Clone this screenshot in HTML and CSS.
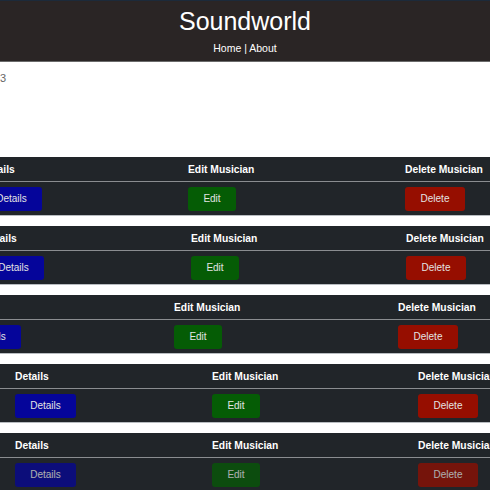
FILE: index.html
```html
<!DOCTYPE html>
<html lang="en">
<head>
<meta charset="utf-8">
<title>Soundworld</title>
<link rel="stylesheet" href="styles.css">
</head>
<body>
<header class="site-header">
  <h1 class="site-title">Soundworld</h1>
  <nav class="site-nav"><a href="#">Home</a> | <a href="#">About</a></nav>
</header>
<main class="content">
  <p class="count">3</p>
  <div class="list">
    <div class="table-wrap t1">
      <table class="musicians">
        <colgroup><col class="c1"><col class="c2"><col class="c3"></colgroup>
        <thead><tr><th>Details</th><th>Edit Musician</th><th>Delete Musician</th></tr></thead>
        <tbody><tr><td><button class="btn btn-details">Details</button></td><td><button class="btn btn-edit">Edit</button></td><td><button class="btn btn-delete">Delete</button></td></tr></tbody>
      </table>
    </div>
    <div class="table-wrap t2">
      <table class="musicians">
        <colgroup><col class="c1"><col class="c2"><col class="c3"></colgroup>
        <thead><tr><th>Details</th><th>Edit Musician</th><th>Delete Musician</th></tr></thead>
        <tbody><tr><td><button class="btn btn-details">Details</button></td><td><button class="btn btn-edit">Edit</button></td><td><button class="btn btn-delete">Delete</button></td></tr></tbody>
      </table>
    </div>
    <div class="table-wrap t3">
      <table class="musicians">
        <colgroup><col class="c1"><col class="c2"><col class="c3"></colgroup>
        <thead><tr><th>Details</th><th>Edit Musician</th><th>Delete Musician</th></tr></thead>
        <tbody><tr><td><button class="btn btn-details">Details</button></td><td><button class="btn btn-edit">Edit</button></td><td><button class="btn btn-delete">Delete</button></td></tr></tbody>
      </table>
    </div>
    <div class="table-wrap t4">
      <table class="musicians">
        <colgroup><col class="c1"><col class="c2"><col class="c3"></colgroup>
        <thead><tr><th>Details</th><th>Edit Musician</th><th>Delete Musician</th></tr></thead>
        <tbody><tr><td><button class="btn btn-details">Details</button></td><td><button class="btn btn-edit">Edit</button></td><td><button class="btn btn-delete">Delete</button></td></tr></tbody>
      </table>
    </div>
    <div class="table-wrap t4 faded">
      <table class="musicians">
        <colgroup><col class="c1"><col class="c2"><col class="c3"></colgroup>
        <thead><tr><th>Details</th><th>Edit Musician</th><th>Delete Musician</th></tr></thead>
        <tbody><tr><td><button class="btn btn-details">Details</button></td><td><button class="btn btn-edit">Edit</button></td><td><button class="btn btn-delete">Delete</button></td></tr></tbody>
      </table>
    </div>
  </div>
</main>
</body>
</html>
```

FILE: styles.css
```css
html, body {
  margin: 0;
  padding: 0;
  background: #ffffff;
  font-family: "Liberation Sans", Arial, sans-serif;
}

.site-header {
  background: #2a2525;
  border-top: 1px solid #1c2a3a;
  border-bottom: 1px solid #6a6a6a;
  height: 60px;
  box-sizing: content-box;
  text-align: center;
  color: #ffffff;
}

.site-title {
  margin: 0;
  padding-top: 6px;
  font-size: 25px;
  line-height: 29px;
  font-weight: normal;
}

.site-nav {
  margin-top: 6px;
  font-size: 10.5px;
  line-height: 12px;
  color: #ffffff;
}

.site-nav a {
  color: #ffffff;
  text-decoration: none;
}

.count {
  margin: 10px 0 72px 0;
  font-size: 11px;
  line-height: 13px;
  color: #666666;
}

.list {
  display: flex;
  flex-direction: column;
  gap: 10px;
}

.table-wrap {
  overflow: hidden;
  background: #212529;
  border-bottom: 1px solid #b8bcc0;
}

.musicians {
  border-collapse: collapse;
  table-layout: fixed;
  width: 640px;
  color: #ffffff;
}

.musicians th {
  height: 24px;
  padding: 0 8px;
  text-align: left;
  font-size: 10.3px;
  font-weight: bold;
  white-space: nowrap;
  border-bottom: 1px solid #8a8d90;
}

.musicians td {
  height: 33px;
  padding: 0 8px;
  vertical-align: middle;
}

.btn {
  display: block;
  height: 24px;
  border: 0;
  border-radius: 3px;
  font-family: "Liberation Sans", Arial, sans-serif;
  font-size: 10px;
  color: #e4e4e4;
  padding: 0;
  cursor: pointer;
}

.btn-details { width: 61px; background: #05059a; }
.btn-edit { width: 48px; background: #055c05; }
.btn-delete { width: 60px; background: #960e00; }

.t1 .musicians { margin-left: -27px; }
.t1 .c1 { width: 207px; }
.t1 .c2 { width: 217px; }

.t2 .musicians { margin-left: -25px; }
.t2 .c1 { width: 208px; }
.t2 .c2 { width: 215px; }

.t3 .musicians { margin-left: -48px; }
.t3 .c1 { width: 214px; }
.t3 .c2 { width: 224px; }

.t4 .musicians { margin-left: 0; }
.t4 .c1 { width: 204px; }
.t4 .c2 { width: 206px; }
.t4 th:first-child,
.t4 td:first-child { padding-left: 15px; }

.faded .btn { opacity: 0.72; }
.faded { border-bottom: 0; }
```
